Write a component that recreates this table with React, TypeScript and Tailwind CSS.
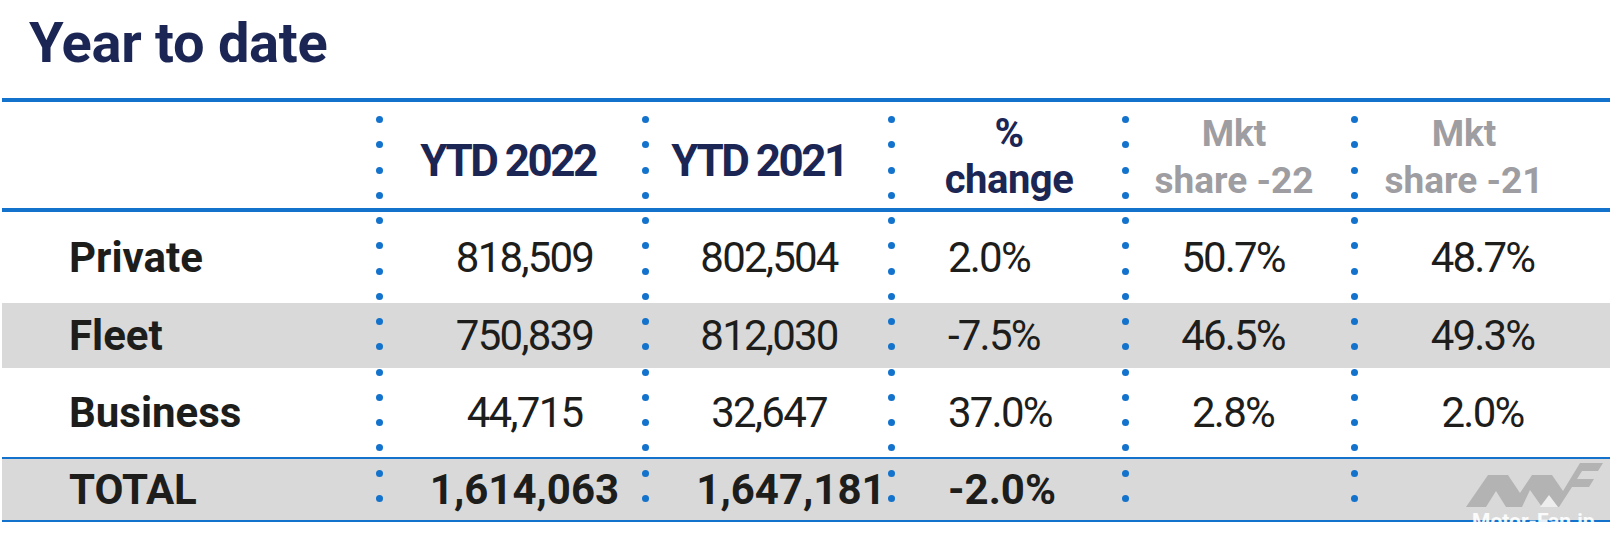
import React from 'react';

const rows = [
  { label: 'Private', v: ['818,509', '802,504', '2.0%', '50.7%', '48.7%'], gray: false, h: 'h-[91px]' },
  { label: 'Fleet', v: ['750,839', '812,030', '-7.5%', '46.5%', '49.3%'], gray: true, h: 'h-[65px]' },
  { label: 'Business', v: ['44,715', '32,647', '37.0%', '2.8%', '2.0%'], gray: false, h: 'h-[89px]' },
];

const dividers = ['left-[374px]', 'left-[640px]', 'left-[886px]', 'left-[1120px]', 'left-[1349px]'];

function Dots({ pos }: { pos: string }) {
  return (
    <div className={`absolute top-[18px] h-[386px] w-[7px] flex flex-col justify-between ${pos}`}>
      {Array.from({ length: 16 }).map((_, i) => (
        <span key={i} className="block w-[7px] h-[7px] rounded-full bg-[#1272cc]" />
      ))}
    </div>
  );
}

const cols = 'grid grid-cols-[381px_263px_246px_234px_229px_255px]';
const num = 'text-[42px] leading-none tracking-[-1.8px] text-[#1d1d1b]';

export default function App() {
  return (
    <div className="relative w-[1613px] h-[543px] bg-white overflow-hidden font-['Roboto',sans-serif]">
      {/* Title */}
      <div className="h-[98px] pl-[29px] pt-[15px]">
        <h1 className="text-[56px] leading-none font-bold tracking-[-0.3px] text-[#1b2654]">Year to date</h1>
      </div>

      {/* Table */}
      <div className="relative mx-[2px] w-[1608px]">
        {/* Header */}
        <div className={`${cols} h-[114px] border-y-4 border-[#1272cc] text-[#1b2654] font-bold`}>
          <div />
          <div className="flex items-center justify-center pr-[13px] pt-[12px] text-[44px] leading-none tracking-[-2.5px]">YTD 2022</div>
          <div className="flex items-center justify-center pr-[20px] pt-[12px] text-[44px] leading-none tracking-[-2.5px]">YTD 2021</div>
          <div className="flex flex-col items-center justify-center pt-[4px] text-[40px] leading-[46px] tracking-[-0.5px]">
            <span>%</span>
            <span>change</span>
          </div>
          <div className="flex flex-col items-center justify-center pr-[13px] pt-[4px] text-[37px] leading-[47px] text-[#9d9da2]">
            <span>Mkt</span>
            <span>share -22</span>
          </div>
          <div className="flex flex-col items-center justify-center pr-[37px] pt-[4px] text-[37px] leading-[47px] text-[#9d9da2]">
            <span>Mkt</span>
            <span>share -21</span>
          </div>
        </div>

        {/* Body */}
        {rows.map((r) => (
          <div key={r.label} className={`${cols} ${r.h} ${r.gray ? 'bg-[#d9d9d9]' : 'bg-white'}`}>
            <div className="flex items-center pl-[67px] text-[42px] leading-none font-bold text-[#1d1d1b]">{r.label}</div>
            <div className={`flex items-center justify-center pl-[20px] ${num}`}>{r.v[0]}</div>
            <div className={`flex items-center justify-center ${num}`}>{r.v[1]}</div>
            <div className={`flex items-center pl-[56px] ${num}`}>{r.v[2]}</div>
            <div className={`flex items-center justify-center pr-[15px] ${num}`}>{r.v[3]}</div>
            <div className={`flex items-center justify-center ${num}`}>{r.v[4]}</div>
          </div>
        ))}

        {/* Total */}
        <div className={`${cols} h-[65px] bg-[#d9d9d9] border-y-2 border-[#1272cc] text-[#1d1d1b] font-bold text-[42px] leading-none`}>
          <div className="flex items-center pl-[67px]">TOTAL</div>
          <div className="flex items-center justify-center pl-[20px]">1,614,063</div>
          <div className="flex items-center justify-center pl-[44px]">1,647,181</div>
          <div className="flex items-center pl-[56px]">-2.0%</div>
          <div />
          <div />
        </div>

        {dividers.map((d) => (
          <Dots key={d} pos={d} />
        ))}
      </div>

      {/* Watermark */}
      <div className="absolute left-[1466px] top-[463px] flex flex-col items-start">
        <svg width="137" height="44" viewBox="0 0 137 44">
          <path
            d="M0 44 L22 12 L42 12 L54 30 L66 12 L86 12 L97 28 L114 0 L137 0 L132 8 L116 8 L111 16 L128 16 L123 24 L106 24 L93 44 L76 44 L64 27 L56 44 L40 44 L30 28 L20 44 Z"
            fill="#b3b3b3"
          />
          <path d="M74 44 L83 32 L92 44 Z" fill="#ededed" />
        </svg>
        <span className="mt-[4px] ml-[6px] text-[21px] leading-none font-bold text-white/90">Motor-Fan.jp</span>
      </div>
    </div>
  );
}
